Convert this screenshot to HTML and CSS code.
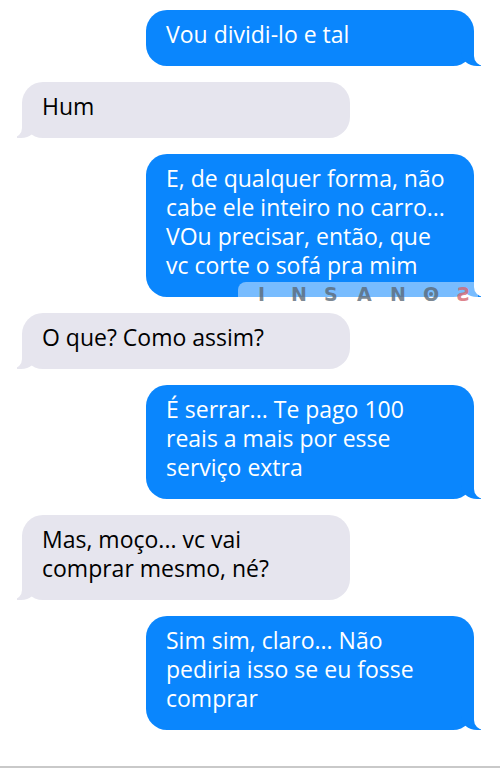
FILE: index.html
```html
<!DOCTYPE html>
<html lang="pt">
<head>
<meta charset="utf-8">
<link rel="stylesheet" href="styles.css">
</head>
<body>
<div class="chat">
  <div class="msg sent">Vou dividi-lo e tal</div>
  <div class="msg recv">Hum</div>
  <div class="msg sent">E, de qualquer forma, não<br>cabe ele inteiro no carro...<br>VOu precisar, então, que<br>vc corte o sofá pra mim</div>
  <div class="msg recv">O que? Como assim?</div>
  <div class="msg sent">É serrar... Te pago 100<br>reais a mais por esse<br>serviço extra</div>
  <div class="msg recv">Mas, moço... vc vai<br>comprar mesmo, né?</div>
  <div class="msg sent">Sim sim, claro... Não<br>pediria isso se eu fosse<br>comprar</div>
  <div class="watermark">
    <span>I</span><span>N</span><span>S</span><span>A</span><span>N</span><span class="wm-o">O</span><span class="wm-s">S</span>
  </div>
</div>
</body>
</html>
```
FILE: styles.css
```css
html, body {
  margin: 0;
  padding: 0;
  background: #fff;
}

.chat {
  position: relative;
  box-sizing: border-box;
  width: 500px;
  height: 768px;
  padding: 10px 26px 0 22px;
  display: flex;
  flex-direction: column;
  gap: 16px;
  border-bottom: 2px solid #c9c9c9;
  font-family: "Open Sans", "Noto Sans", sans-serif;
  font-size: 23px;
  line-height: 29px;
}

.msg {
  position: relative;
  box-sizing: border-box;
  width: 328px;
  padding: 10px 20px 17px 20px;
  border-radius: 21px;
  white-space: nowrap;
}

.sent {
  align-self: flex-end;
  background: #0a86fd;
  color: #fff;
}

.recv {
  align-self: flex-start;
  background: #e6e5ee;
  color: #000;
}

.sent::before,
.sent::after,
.recv::before,
.recv::after {
  content: "";
  position: absolute;
  bottom: 0;
  height: 22px;
}

.sent::before {
  right: -7px;
  width: 20px;
  background: #0a86fd;
  border-bottom-left-radius: 16px 14px;
}

.sent::after {
  right: -12px;
  width: 12px;
  background: #fff;
  border-bottom-left-radius: 10px;
}

.recv::before {
  left: -5px;
  width: 20px;
  background: #e6e5ee;
  border-bottom-right-radius: 16px 14px;
}

.recv::after {
  left: -12px;
  width: 12px;
  background: #fff;
  border-bottom-right-radius: 10px;
}

.watermark {
  position: absolute;
  left: 238px;
  top: 282px;
  width: 240px;
  height: 24px;
  box-sizing: border-box;
  padding: 3px 0 0 20px;
  display: flex;
  align-items: flex-start;
  background: rgba(255, 255, 255, 0.45);
  border-top-left-radius: 8px;
  font-family: "DejaVu Sans", sans-serif;
  font-weight: bold;
  font-size: 19px;
  line-height: 19px;
  color: rgba(90, 104, 118, 0.8);
}

.watermark span {
  position: relative;
  width: 33px;
}

.watermark .wm-o::after {
  content: "";
  position: absolute;
  left: 6px;
  top: 7px;
  width: 4px;
  height: 4px;
  border-radius: 50%;
  background: currentColor;
}

.watermark .wm-s {
  color: rgba(214, 100, 110, 0.8);
  transform: scaleX(-1);
  width: auto;
}
```
